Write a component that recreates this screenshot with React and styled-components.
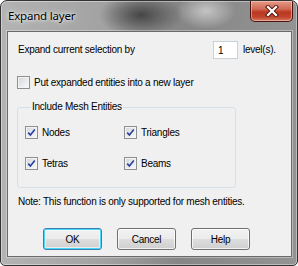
import React from "react";
import styled, { createGlobalStyle } from "styled-components";

const Global = createGlobalStyle`
  html, body { margin: 0; padding: 0; background: #ffffff; }
  * { box-sizing: border-box; }
`;

const Window = styled.div`
  position: relative;
  width: 298px;
  height: 266px;
  border: 1px solid #333333;
  border-radius: 7px 7px 5px 5px;
  box-shadow: inset 0 0 0 1px rgba(255, 255, 255, 0.4);
  background:
    radial-gradient(ellipse 42px 22px at 140px 14px, rgba(50, 50, 50, 0.8), rgba(50, 50, 50, 0) 100%),
    radial-gradient(ellipse 30px 18px at 205px 10px, rgba(255, 255, 255, 0.5), rgba(255, 255, 255, 0) 100%),
    linear-gradient(90deg, #b3b3b3 0%, #a2a2a2 35%, #868686 60%, #939393 100%);
  display: flex;
  flex-direction: column;
  padding: 0 5px 8px 6px;
  overflow: hidden;
  font-family: "Liberation Sans", Arial, sans-serif;
`;

const TitleBar = styled.div`
  height: 30px;
  display: flex;
  align-items: flex-start;
  justify-content: space-between;
`;

const Title = styled.span`
  margin-top: 7px;
  margin-left: 1px;
  font-family: "Noto Sans", "Open Sans", sans-serif;
  font-size: 11.5px;
  letter-spacing: -0.2px;
  color: #000;
  text-shadow: 0 0 6px rgba(255, 255, 255, 0.95), 0 0 3px rgba(255, 255, 255, 0.9);
`;

const CloseButton = styled.div`
  width: 43px;
  height: 21px;
  margin-right: -1px;
  border: 1px solid #4a1410;
  border-top: none;
  border-radius: 0 0 5px 5px;
  background: linear-gradient(180deg, #e49a88 0%, #d06a55 40%, #bb3822 55%, #c2432c 80%, #d67c63 100%);
  box-shadow: inset 0 0 0 1px rgba(255, 220, 210, 0.5);
  display: flex;
  align-items: center;
  justify-content: center;
`;

const Client = styled.div`
  flex: 1;
  background: #f0f0f0;
  border: 1px solid #6a6a6a;
  box-shadow: 0 0 0 1px rgba(255, 255, 255, 0.35);
  display: flex;
  flex-direction: column;
  padding: 9px 0 0 10px;
  font-size: 10px;
  letter-spacing: -0.25px;
  color: #000;
`;

const TopRow = styled.div`
  display: flex;
  align-items: center;
  height: 18px;
`;

const Label = styled.span`
  width: ${(p) => p.$w || "auto"};
  white-space: nowrap;
  line-height: 12px;
`;

const NumberBox = styled.div`
  width: 25px;
  height: 18px;
  background: #fff;
  border: 1px solid #c9d0d8;
  padding-left: 4px;
  display: flex;
  align-items: center;
  margin-right: 5px;
`;

const CheckRow = styled.label`
  display: flex;
  align-items: center;
  gap: 4px;
  margin-top: ${(p) => p.$mt || 0}px;
  margin-left: ${(p) => p.$ml || 0}px;
  height: 13px;
  white-space: nowrap;
`;

const Box = styled.span`
  width: 13px;
  height: 13px;
  flex: none;
  border: 1px solid #8e8f8f;
  background: linear-gradient(135deg, #d1d5da 0%, #e9ebee 55%, #f8f8f8 100%);
  box-shadow: inset 0 0 0 1px #f4f4f4;
  display: flex;
  align-items: center;
  justify-content: center;
`;

const Group = styled.fieldset`
  margin: 12px 0 0 -1px;
  width: 219px;
  border: 1px solid #d5dfe5;
  border-radius: 3px;
  padding: 13px 0 17px 7px;
  min-width: 0;
`;

const Legend = styled.legend`
  padding: 0 1px;
  margin-left: 6px;
  line-height: 12px;
  font-size: 10px;
`;

const Grid = styled.div`
  display: grid;
  grid-template-columns: 99px auto;
  row-gap: 18px;
`;

const Note = styled.div`
  margin-top: 8px;
  line-height: 12px;
  white-space: nowrap;
`;

const Buttons = styled.div`
  display: flex;
  gap: 15px;
  margin-top: 20px;
  padding-left: 25px;
`;

const Button = styled.div`
  width: 59px;
  height: 22px;
  border: 1px solid ${(p) => (p.$default ? "#3c7fb1" : "#707070")};
  border-radius: 3px;
  background: linear-gradient(180deg, #f2f2f2 0%, #ebebeb 48%, #dddddd 52%, #cfcfcf 100%);
  box-shadow: ${(p) =>
    p.$default
      ? "inset 0 0 0 1px #48d6f8, inset 0 0 0 2px rgba(255,255,255,0.6)"
      : "inset 0 0 0 1px rgba(255,255,255,0.75)"};
  display: flex;
  align-items: center;
  justify-content: center;
  font-size: 10px;
`;

const Check = () => (
  <svg width="9" height="9" viewBox="0 0 9 9">
    <path d="M1.2 4.6 L3.4 7 L7.8 1.4" fill="none" stroke="#2a3f9e" strokeWidth="1.6" />
  </svg>
);

const CheckBox = ({ checked, children, ml, mt }) => (
  <CheckRow $ml={ml} $mt={mt}>
    <Box>{checked && <Check />}</Box>
    <span>{children}</span>
  </CheckRow>
);

export default function App() {
  return (
    <>
      <Global />
      <Window>
        <TitleBar>
          <Title>Expand layer</Title>
          <CloseButton>
            <svg width="14" height="12" viewBox="0 0 14 12">
              <path
                d="M3 2 L11 10 M11 2 L3 10"
                stroke="#5b1a12"
                strokeWidth="4.2"
                strokeLinecap="square"
                fill="none"
              />
              <path
                d="M3 2 L11 10 M11 2 L3 10"
                stroke="#ffffff"
                strokeWidth="2.2"
                strokeLinecap="square"
                fill="none"
              />
            </svg>
          </CloseButton>
        </TitleBar>
        <Client>
          <TopRow>
            <Label $w="195px">Expand current selection by</Label>
            <NumberBox>1</NumberBox>
            <Label>level(s).</Label>
          </TopRow>
          <CheckBox mt={17} ml={-1}>
            Put expanded entities into a new layer
          </CheckBox>
          <Group>
            <Legend>Include Mesh Entities</Legend>
            <Grid>
              <CheckBox checked>Nodes</CheckBox>
              <CheckBox checked>Triangles</CheckBox>
              <CheckBox checked>Tetras</CheckBox>
              <CheckBox checked>Beams</CheckBox>
            </Grid>
          </Group>
          <Note>Note: This function is only supported for mesh entities.</Note>
          <Buttons>
            <Button $default>OK</Button>
            <Button>Cancel</Button>
            <Button>Help</Button>
          </Buttons>
        </Client>
      </Window>
    </>
  );
}
